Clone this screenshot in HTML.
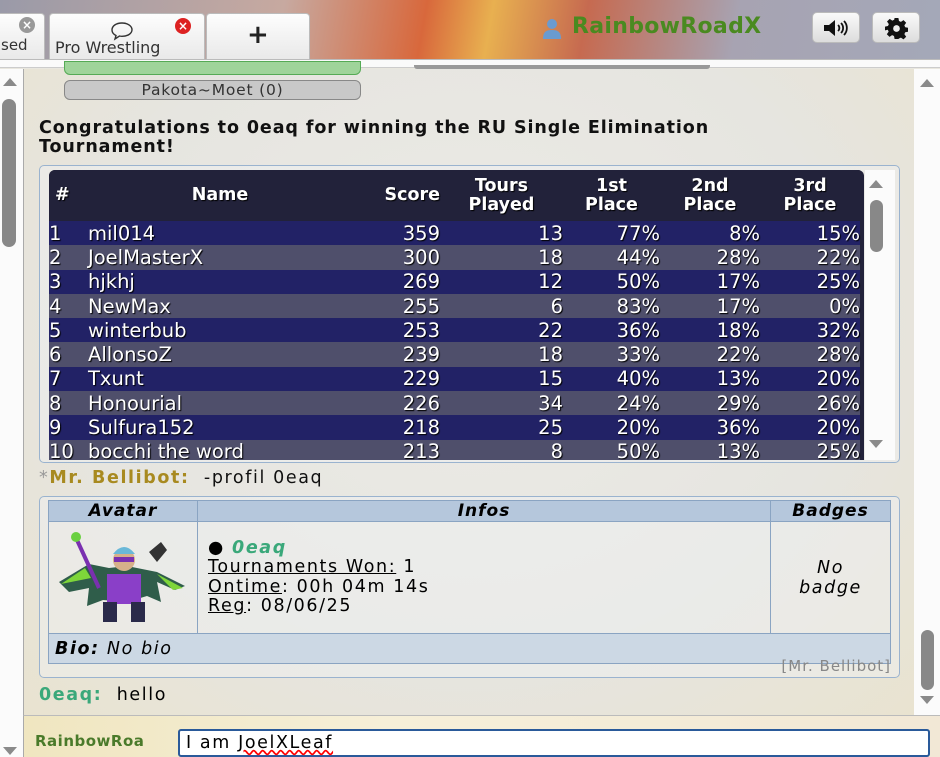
<!DOCTYPE html>
<html><head><meta charset="utf-8"><style>
*{box-sizing:border-box;margin:0;padding:0}
body{width:940px;height:757px;overflow:hidden;position:relative;font-family:"DejaVu Sans","Liberation Sans",sans-serif;background:#e9e7df}
.top{position:absolute;left:0;top:0;width:940px;height:60px;background:linear-gradient(100deg,#9a9aa8 0%,#c7a9a0 30%,#d8683c 45%,#e8b050 52%,#c66a50 62%,#a7a3b2 78%,#a4a8b8 100%)}
.tab{position:absolute;top:13px;height:46px;background:linear-gradient(#fdfdfd,#e9e9e9);border:1px solid #bbb;border-bottom:none;border-radius:4px 4px 0 0;font-size:15px;color:#333}
.x{position:absolute;width:16px;height:16px;border-radius:50%;color:#fff;font-size:12px;font-weight:bold;text-align:center;line-height:16px}
.strip{position:absolute;left:0;top:59px;width:940px;height:9px;background:#fafafa;border-bottom:1px solid #ccc;border-top:1px solid #bbb}
.btn{position:absolute;top:12px;width:48px;height:31px;background:linear-gradient(#fafafa,#ddd);border:1px solid #bbb;border-radius:5px}
.main{position:absolute;left:23px;top:69px;width:891px;height:646px;background:radial-gradient(ellipse at 50% 40%,#ecebe6 0%,#e6e5e0 60%,#e9e3d0 100%);border-left:1px solid #aaa}
.sb{position:absolute;background:#fbfbfb}
.thumb{position:absolute;background:#888;border-radius:7px}
.tri{position:absolute;width:0;height:0;border-left:7px solid transparent;border-right:7px solid transparent}
.up{border-bottom:8px solid #8a8a8a}.dn{border-top:8px solid #8a8a8a}
.box{position:absolute;border:1px solid #9ab3cf;border-radius:5px;background:rgba(240,242,245,.45)}
table{border-collapse:collapse}
.lb td{height:24.3px;color:#fff;font-size:19.5px;text-shadow:1px 1px 1px #000;white-space:nowrap;padding:0}
.lb tr.a td{background:#222266}.lb tr.b td{background:#4f4f6b}
.lb th{color:#fff;font-size:17.5px;font-weight:bold;text-shadow:1px 1px 1px #000;line-height:19px;background:#22223a;height:51px;padding:0}
.r{text-align:right}
.pf td,.pf th{border:1px solid #8aa4c2}
.pf th{background:#b5c7dc;font-style:italic;font-size:17px;height:20px;letter-spacing:1px}
.w{letter-spacing:1.6px}
</style></head><body>
<div class="top"></div>
<div class="tab" style="left:-5px;width:50px"><div class="x" style="left:23px;top:3px;background:#999">×</div><span style="position:absolute;left:5px;top:22px">sed</span></div>
<div class="tab" style="left:49px;width:156px"><svg style="position:absolute;left:60px;top:7px" width="24" height="20" viewBox="0 0 24 20"><path d="M12 2C6 2 2 5 2 9c0 2.5 2 4.5 4 5.5L5 18l4.5-3c1 .2 1.7.3 2.5.3 6 0 10-3 10-6.5S18 2 12 2z" fill="none" stroke="#333" stroke-width="1.4"/></svg><div class="x" style="left:125px;top:4px;background:#d22">×</div><span style="position:absolute;left:5px;top:24px;font-size:16px">Pro Wrestling</span></div>
<div class="tab" style="left:206px;width:104px"><span style="position:absolute;left:40px;top:6px;font-size:26px;font-weight:bold;color:#222">+</span></div>
<svg style="position:absolute;left:541px;top:18px" width="22" height="22" viewBox="0 0 22 22"><circle cx="11" cy="6" r="5" fill="#6a9bd0"/><path d="M2 21c0-7 3-9 9-9s9 2 9 9z" fill="#6a9bd0"/></svg>
<div style="position:absolute;left:572px;top:14px;font-size:22px;font-weight:bold;color:#4a8a20;letter-spacing:.3px">RainbowRoadX</div>
<div class="btn" style="left:812px"><svg style="position:absolute;left:9px;top:5px" width="30" height="20" viewBox="0 0 30 20"><path d="M2 7h5l6-5v16l-6-5H2z" fill="#111"/><path d="M16 7a4 4 0 0 1 0 6M19 5a7 7 0 0 1 0 10M22 3a10 10 0 0 1 0 14" fill="none" stroke="#111" stroke-width="1.8"/></svg></div>
<div class="btn" style="left:872px"><svg style="position:absolute;left:12px;top:4px" width="23" height="23" viewBox="0 0 24 24"><path d="M10 1h4l.6 3.2 2 .9 2.7-1.9 2.8 2.8-1.9 2.7.9 2 3.2.6v4l-3.2.6-.9 2 1.9 2.7-2.8 2.8-2.7-1.9-2 .9L14 23h-4l-.6-3.2-2-.9-2.7 1.9-2.8-2.8 1.9-2.7-.9-2L-.1 14v-4l3.2-.6.9-2L2.1 4.7 4.9 1.9l2.7 1.9 2-.9z" fill="#111"/><circle cx="12" cy="12" r="3.5" fill="#eee"/></svg></div>
<div class="strip"></div>
<div class="sb" style="left:0;top:69px;width:23px;height:688px"><div class="tri up" style="left:3px;top:9px"></div><div class="thumb" style="left:2px;top:30px;width:14px;height:148px"></div><div class="tri dn" style="left:3px;top:678px"></div></div>
<div class="main">
 <div style="position:absolute;left:40px;top:-8px;width:297px;height:14px;background:#9fd49a;border:1px solid #5a5;border-radius:0 0 6px 6px"></div>
 <div style="position:absolute;left:40px;top:11px;width:297px;height:20px;background:#c8c8c8;border:1px solid #888;border-radius:6px;font-size:15.5px;letter-spacing:.8px;text-align:center;line-height:18px;color:#333">Pakota~Moet (0)</div>
 <div style="position:absolute;left:390px;top:-4px;width:296px;height:4px;background:#999;border-radius:0 0 3px 3px"></div>
 <div style="position:absolute;left:15px;top:50px;width:850px;font-size:17.5px;letter-spacing:.9px;font-weight:bold;line-height:19px;color:#111">Congratulations to 0eaq for winning the RU Single Elimination<br>Tournament!</div>
 <div class="box" style="left:15px;top:96px;width:861px;height:298px">
  <div style="position:absolute;left:9px;top:4px;width:815px;height:290px;overflow:hidden;border-radius:6px 6px 0 0;background:#22223a">
  <table class="lb" style="width:811px">
   <tr><th style="width:39px;text-align:left;padding-left:6px">#</th><th style="width:264px">Name</th><th style="width:88px;text-align:right">Score</th><th style="width:123px">Tours<br>Played</th><th style="width:97px">1st<br>Place</th><th style="width:100px">2nd<br>Place</th><th style="width:100px">3rd<br>Place</th></tr>
   <tr class="a"><td>1</td><td>mil014</td><td class="r">359</td><td class="r">13</td><td class="r">77%</td><td class="r">8%</td><td class="r">15%</td></tr>
   <tr class="b"><td>2</td><td>JoelMasterX</td><td class="r">300</td><td class="r">18</td><td class="r">44%</td><td class="r">28%</td><td class="r">22%</td></tr>
   <tr class="a"><td>3</td><td>hjkhj</td><td class="r">269</td><td class="r">12</td><td class="r">50%</td><td class="r">17%</td><td class="r">25%</td></tr>
   <tr class="b"><td>4</td><td>NewMax</td><td class="r">255</td><td class="r">6</td><td class="r">83%</td><td class="r">17%</td><td class="r">0%</td></tr>
   <tr class="a"><td>5</td><td>winterbub</td><td class="r">253</td><td class="r">22</td><td class="r">36%</td><td class="r">18%</td><td class="r">32%</td></tr>
   <tr class="b"><td>6</td><td>AllonsoZ</td><td class="r">239</td><td class="r">18</td><td class="r">33%</td><td class="r">22%</td><td class="r">28%</td></tr>
   <tr class="a"><td>7</td><td>Txunt</td><td class="r">229</td><td class="r">15</td><td class="r">40%</td><td class="r">13%</td><td class="r">20%</td></tr>
   <tr class="b"><td>8</td><td>Honourial</td><td class="r">226</td><td class="r">34</td><td class="r">24%</td><td class="r">29%</td><td class="r">26%</td></tr>
   <tr class="a"><td>9</td><td>Sulfura152</td><td class="r">218</td><td class="r">25</td><td class="r">20%</td><td class="r">36%</td><td class="r">20%</td></tr>
   <tr class="b"><td>10</td><td>bocchi the word</td><td class="r">213</td><td class="r">8</td><td class="r">50%</td><td class="r">13%</td><td class="r">25%</td></tr>
  </table></div>
  <div style="position:absolute;left:825px;top:4px;width:30px;height:290px;background:#fbfbfb"><div class="tri up" style="left:4px;top:10px"></div><div class="thumb" style="left:5px;top:30px;width:13px;height:52px"></div><div class="tri dn" style="left:4px;top:270px"></div></div>
 </div>
 <div class="w" style="position:absolute;left:15px;top:399px;font-size:17.5px;color:#111"><span style="color:#999">*</span><b style="color:#a88a20">Mr. Bellibot:</b>&nbsp; -profil 0eaq</div>
 <div class="box" style="left:15px;top:427px;width:861px;height:182px">
  <table class="pf" style="position:absolute;left:8px;top:3px;width:843px;font-size:17.5px">
   <tr><th style="width:149px">Avatar</th><th>Infos</th><th style="width:120px">Badges</th></tr>
   <tr style="height:108px"><td style="padding:0"><svg width="148" height="106" viewBox="0 0 148 106">
    <path d="M10 60l30-18 20 4 18-2 30 6 28 14-10 4-18-8 4 20-14-6-20 6-24-2-16 6 2-18-20 4z" fill="#2f5d4a"/>
    <path d="M12 62l24-16 6 10zM108 52l26 14-10 2z" fill="#7ed63a"/>
    <rect x="58" y="52" width="34" height="30" fill="#8a3fc8"/><rect x="54" y="80" width="14" height="20" fill="#2a2a4a"/><rect x="82" y="80" width="14" height="20" fill="#2a2a4a"/>
    <circle cx="75" cy="38" r="11" fill="#d6b08a"/><path d="M64 32q11-14 22 0z" fill="#6ab8d8"/><rect x="65" y="35" width="20" height="5" fill="#7a30b0"/>
    <path d="M28 18l22 48" stroke="#7a30b0" stroke-width="4"/><circle cx="27" cy="15" r="5" fill="#6ad040"/>
    <path d="M100 30l12-10 6 8-10 12z" fill="#333"/></svg></td>
    <td class="w" style="padding:4px 10px;line-height:19.5px;vertical-align:middle"><div>● <b style="color:#3aa87a;font-style:italic">0eaq</b></div><div><u>Tournaments Won:</u> 1</div><div><u>Ontime</u>: 00h 04m 14s</div><div><u>Reg</u>: 08/06/25</div></td>
    <td class="w" style="text-align:center;font-style:italic;line-height:20px">No<br>badge</td></tr>
   <tr style="height:30px;background:#ccd8e4"><td class="w" colspan="3" style="padding-left:6px;font-style:italic"><b>Bio:</b> No bio</td></tr>
  </table>
  <div style="position:absolute;right:8px;top:160px;font-size:15px;letter-spacing:1px;color:#888">[Mr. Bellibot]</div>
 </div>
 <div class="w" style="position:absolute;left:15px;top:616px;font-size:17.5px"><b style="color:#3aa87a">0eaq:</b>&nbsp; hello</div>
</div>
<div class="sb" style="left:914px;top:69px;width:26px;height:646px"><div class="tri up" style="left:6px;top:10px"></div><div class="thumb" style="left:7px;top:561px;width:13px;height:60px"></div><div class="tri dn" style="left:6px;top:627px"></div></div>
<div style="position:absolute;left:23px;top:715px;width:917px;height:42px;background:linear-gradient(90deg,#f0e6c0,#f6efd8 40%,#f2e8d6);border-top:1px solid #bbb;border-left:1px solid #aaa"></div>
<div style="position:absolute;left:35px;top:732px;font-size:15px;font-weight:bold;letter-spacing:.5px;color:#4a7a2a">RainbowRoa</div>
<div class="w" style="position:absolute;left:178px;top:729px;width:752px;height:28px;background:#fff;border:2px solid #2a5a9a;border-radius:3px;font-size:17.5px;padding:2px 6px">I am <span style="text-decoration:underline wavy red">JoelXLeaf</span></div>
</body></html>
